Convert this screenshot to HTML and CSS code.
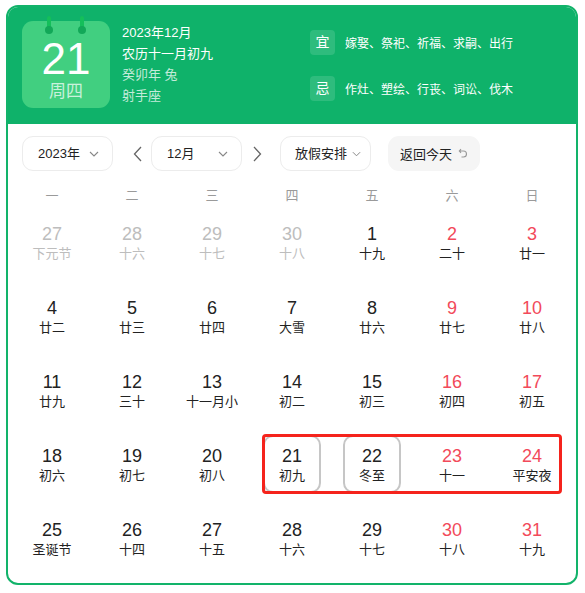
FILE: index.html
```html
<!DOCTYPE html>
<html lang="zh">
<head>
<meta charset="utf-8">
<link rel="stylesheet" href="styles.css">
</head>
<body>
<div class="card">
  <div class="header">
    <div class="daybox">
      <span class="pin pin-l"></span>
      <span class="pin pin-r"></span>
      <div class="daynum">21</div>
      <div class="weekday">周四</div>
    </div>
    <div class="info">
      <div class="info-line">2023年12月</div>
      <div class="info-line">农历十一月初九</div>
      <div class="info-line dim">癸卯年 兔</div>
      <div class="info-line dim">射手座</div>
    </div>
    <div class="yiji">
      <div class="yj-row"><span class="yj-tag">宜</span><span class="yj-text">嫁娶、祭祀、祈福、求嗣、出行</span></div>
      <div class="yj-row"><span class="yj-tag">忌</span><span class="yj-text">作灶、塑绘、行丧、词讼、伐木</span></div>
    </div>
  </div>

  <div class="controls">
    <div class="select sel-year"><span>2023年</span><svg class="chev" viewBox="0 0 10 6" width="10" height="6"><path d="M1 1l4 4 4-4" fill="none" stroke="#888" stroke-width="1.1"/></svg></div>
    <svg class="arrow arrow-l" viewBox="0 0 9 16" width="9" height="16"><path d="M8 1L1.5 8 8 15" fill="none" stroke="#666" stroke-width="1.3"/></svg>
    <div class="select sel-month"><span>12月</span><svg class="chev" viewBox="0 0 10 6" width="10" height="6"><path d="M1 1l4 4 4-4" fill="none" stroke="#888" stroke-width="1.1"/></svg></div>
    <svg class="arrow arrow-r" viewBox="0 0 9 16" width="9" height="16"><path d="M1 1l6.5 7L1 15" fill="none" stroke="#666" stroke-width="1.3"/></svg>
    <div class="select sel-holiday"><span>放假安排</span><svg class="chev" viewBox="0 0 10 6" width="9" height="6"><path d="M1 1l4 4 4-4" fill="none" stroke="#888" stroke-width="1.1"/></svg></div>
    <div class="today-btn"><span>返回今天</span><svg class="undo" viewBox="0 0 10 11" width="10" height="11"><path d="M3 1.2L1.3 3 3 4.8M1.5 3h4a3 3 0 0 1 0 6H3.5" fill="none" stroke="#999" stroke-width="1.1"/></svg></div>
  </div>

  <div class="weekdays">
    <span>一</span><span>二</span><span>三</span><span>四</span><span>五</span><span>六</span><span>日</span>
  </div>

  <div class="grid">
    <div class="cell other"><div class="n">27</div><div class="l">下元节</div></div>
    <div class="cell other"><div class="n">28</div><div class="l">十六</div></div>
    <div class="cell other"><div class="n">29</div><div class="l">十七</div></div>
    <div class="cell other"><div class="n">30</div><div class="l">十八</div></div>
    <div class="cell"><div class="n">1</div><div class="l">十九</div></div>
    <div class="cell we"><div class="n">2</div><div class="l">二十</div></div>
    <div class="cell we"><div class="n">3</div><div class="l">廿一</div></div>

    <div class="cell"><div class="n">4</div><div class="l">廿二</div></div>
    <div class="cell"><div class="n">5</div><div class="l">廿三</div></div>
    <div class="cell"><div class="n">6</div><div class="l">廿四</div></div>
    <div class="cell"><div class="n">7</div><div class="l">大雪</div></div>
    <div class="cell"><div class="n">8</div><div class="l">廿六</div></div>
    <div class="cell we"><div class="n">9</div><div class="l">廿七</div></div>
    <div class="cell we"><div class="n">10</div><div class="l">廿八</div></div>

    <div class="cell"><div class="n">11</div><div class="l">廿九</div></div>
    <div class="cell"><div class="n">12</div><div class="l">三十</div></div>
    <div class="cell"><div class="n">13</div><div class="l">十一月小</div></div>
    <div class="cell"><div class="n">14</div><div class="l">初二</div></div>
    <div class="cell"><div class="n">15</div><div class="l">初三</div></div>
    <div class="cell we"><div class="n">16</div><div class="l">初四</div></div>
    <div class="cell we"><div class="n">17</div><div class="l">初五</div></div>

    <div class="cell"><div class="n">18</div><div class="l">初六</div></div>
    <div class="cell"><div class="n">19</div><div class="l">初七</div></div>
    <div class="cell"><div class="n">20</div><div class="l">初八</div></div>
    <div class="cell boxed"><div class="n">21</div><div class="l">初九</div></div>
    <div class="cell boxed"><div class="n">22</div><div class="l">冬至</div></div>
    <div class="cell we"><div class="n">23</div><div class="l">十一</div></div>
    <div class="cell we"><div class="n">24</div><div class="l">平安夜</div></div>

    <div class="cell"><div class="n">25</div><div class="l">圣诞节</div></div>
    <div class="cell"><div class="n">26</div><div class="l">十四</div></div>
    <div class="cell"><div class="n">27</div><div class="l">十五</div></div>
    <div class="cell"><div class="n">28</div><div class="l">十六</div></div>
    <div class="cell"><div class="n">29</div><div class="l">十七</div></div>
    <div class="cell we"><div class="n">30</div><div class="l">十八</div></div>
    <div class="cell we"><div class="n">31</div><div class="l">十九</div></div>

    <div class="mark"></div>
  </div>
</div>
</body>
</html>
```

FILE: styles.css
```css
* { box-sizing: border-box; }
html, body { margin: 0; padding: 0; background: #fff; }
body {
  font-family: "Liberation Sans", "Noto Sans CJK SC", sans-serif;
  color: #222;
}
.card {
  margin: 5px 0 0 6px;
  width: 572px;
  border: 2px solid #12b36a;
  border-radius: 12px;
  overflow: hidden;
  padding-bottom: 16px;
}
.header {
  background: #0fb26a;
  display: flex;
  align-items: flex-start;
  padding: 14px 14px 16px 14px;
  height: 117px;
}
.daybox {
  position: relative;
  width: 88px;
  height: 87px;
  background: #41cf80;
  border-radius: 11px;
  display: flex;
  flex-direction: column;
  align-items: center;
}
.pin {
  position: absolute;
  top: -5px;
  width: 4px;
  height: 15px;
  background: #14bf5a;
  border-radius: 2px;
}
.pin::after {
  content: "";
  position: absolute;
  left: -2px;
  bottom: -3px;
  width: 8px;
  height: 8px;
  border-radius: 50%;
  background: #12a858;
}
.pin-l { left: 25px; }
.pin-r { left: 58px; }
.daynum {
  margin-top: 17px;
  font-size: 44px;
  line-height: 42px;
  color: #fff;
}
.weekday {
  margin-top: 2px;
  font-size: 17px;
  line-height: 20px;
  color: rgba(255,255,255,0.72);
}
.info {
  margin-left: 12px;
  margin-top: 1px;
}
.info-line {
  font-size: 13px;
  line-height: 21px;
  color: #fff;
}
.info-line.dim { color: rgba(255,255,255,0.75); }
.yiji {
  margin-left: 97px;
  margin-top: 9px;
  display: flex;
  flex-direction: column;
  gap: 21px;
}
.yj-row {
  display: flex;
  align-items: center;
}
.yj-tag {
  width: 25px;
  height: 25px;
  border-radius: 4px;
  background: rgba(255,255,255,0.13);
  color: #fff;
  font-size: 14px;
  line-height: 25px;
  text-align: center;
}
.yj-text {
  margin-left: 10px;
  font-size: 12px;
  color: #fff;
}
.controls {
  display: flex;
  align-items: center;
  padding-left: 14px;
  margin-top: 12px;
  height: 35px;
}
.select {
  width: 91px;
  height: 35px;
  border: 1px solid #ececec;
  border-radius: 11px;
  display: flex;
  align-items: center;
  justify-content: space-between;
  padding: 0 13px 0 15px;
  font-size: 13px;
  color: #222;
  white-space: nowrap;
}
.select span { line-height: 20px; }
.chev { display: block; }
.arrow { display: block; }
.arrow-l { margin: 0 9px 0 20px; }
.arrow-r { margin: 0 18px 0 11px; }
.sel-holiday {
  justify-content: flex-start;
  gap: 5px;
  padding: 0 8px 0 14px;
}
.today-btn {
  margin-left: 17px;
  width: 92px;
  height: 35px;
  border-radius: 11px;
  background: #f5f5f5;
  display: flex;
  align-items: center;
  padding-left: 12px;
  font-size: 13px;
  color: #222;
  gap: 6px;
  white-space: nowrap;
}
.undo { display: block; }
.weekdays {
  display: grid;
  grid-template-columns: repeat(7, 80px);
  padding: 0 4px;
  margin-top: 15px;
  height: 20px;
  font-size: 13px;
  line-height: 20px;
  color: #9a9a9a;
}
.weekdays span { text-align: center; }
.grid {
  position: relative;
  display: grid;
  grid-template-columns: repeat(7, 80px);
  row-gap: 16px;
  margin: 7px 4px 0 4px;
}
.cell {
  justify-self: center;
  width: 58px;
  height: 58px;
  border-radius: 10px;
  border: 2px solid transparent;
  padding-top: 8px;
  text-align: center;
}
.cell .n {
  font-size: 18px;
  line-height: 22px;
  color: #222;
}
.cell .l {
  font-size: 13px;
  line-height: 18px;
  color: #222;
}
.cell.we .n { color: #f24a5a; }
.cell.other .n, .cell.other .l { color: #bdbdbd; }
.cell.boxed { border-color: #c6c6c6; }
.mark {
  position: absolute;
  left: 250px;
  top: 221px;
  width: 300px;
  height: 60px;
  border: 3px solid #f5231c;
  border-radius: 4px;
}
```
